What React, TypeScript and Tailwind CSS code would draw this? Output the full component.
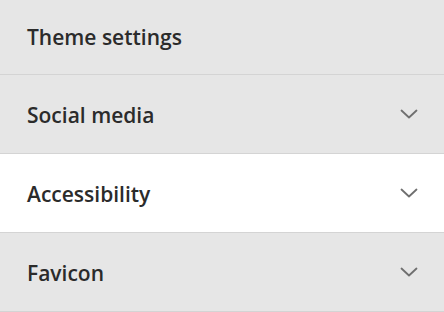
const sections = [
  { label: 'Social media', active: false },
  { label: 'Accessibility', active: true },
  { label: 'Favicon', active: false },
];

function Chevron() {
  return (
    <svg width="18" height="10" viewBox="0 0 18 10" fill="none" className="text-[#6f6f6f]">
      <path d="M1.5 1.5L9 8.5L16.5 1.5" stroke="currentColor" strokeWidth="1.8" strokeLinecap="round" strokeLinejoin="round" />
    </svg>
  );
}

export default function App() {
  return (
    <div className="flex h-[312px] w-[444px] flex-col overflow-hidden bg-[#e6e6e6] font-['Open_Sans',sans-serif] text-[#2b2b2b]">
      <div className="flex h-[75px] shrink-0 items-center border-b border-[#d4d4d4] pl-[27px] pt-[1px]">
        <h2 className="text-[21px] font-semibold">Theme settings</h2>
      </div>
      {sections.map((s) => (
        <div
          key={s.label}
          className={`flex h-[79px] shrink-0 items-center justify-between border-b border-[#d4d4d4] pl-[27px] pr-[26px] ${s.active ? 'bg-white' : 'bg-[#e6e6e6]'}`}
        >
          <span className="pt-[4px] text-[21px] font-semibold">{s.label}</span>
          <Chevron />
        </div>
      ))}
    </div>
  );
}
